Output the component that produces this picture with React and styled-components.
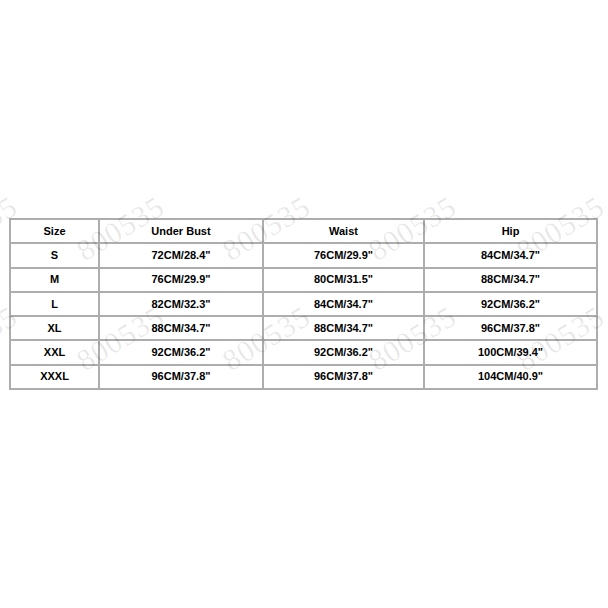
import styled, { createGlobalStyle } from 'styled-components'

const Global = createGlobalStyle`
  html, body {
    margin: 0;
    padding: 0;
    background: #fff;
  }
`

const Page = styled.div`
  position: relative;
  width: 608px;
  height: 608px;
  overflow: hidden;
  box-sizing: border-box;
  padding: 218px 10px 0 9px;
  background: #fff;
`

const SizeTable = styled.table`
  width: 587px;
  table-layout: fixed;
  border-collapse: collapse;
  font-family: "Liberation Sans", Arial, sans-serif;
  font-size: 11px;
  font-weight: bold;
  color: #000;
`

const Col = styled.col`
  width: ${p => p.w}px;
`

const Cell = styled.td`
  height: 22.3px;
  padding: 0;
  border: 2px solid #adadad;
  text-align: center;
  vertical-align: middle;
  line-height: 1;
`

const Marks = styled.div`
  position: absolute;
  inset: 0;
  pointer-events: none;
`

const Mark = styled.span`
  position: absolute;
  left: ${p => p.x}px;
  top: ${p => p.y}px;
  transform: rotate(-31deg);
  transform-origin: left bottom;
  font-family: "Liberation Serif", "Times New Roman", serif;
  font-size: 30px;
  line-height: 30px;
  letter-spacing: 1px;
  color: rgba(0, 0, 0, 0.09);
  white-space: nowrap;
`

const rows = [
  ['Size', 'Under Bust', 'Waist', 'Hip'],
  ['S', '72CM/28.4"', '76CM/29.9"', '84CM/34.7"'],
  ['M', '76CM/29.9"', '80CM/31.5"', '88CM/34.7"'],
  ['L', '82CM/32.3"', '84CM/34.7"', '92CM/36.2"'],
  ['XL', '88CM/34.7"', '88CM/34.7"', '96CM/37.8"'],
  ['XXL', '92CM/36.2"', '92CM/36.2"', '100CM/39.4"'],
  ['XXXL', '96CM/37.8"', '96CM/37.8"', '104CM/40.9"'],
]

const widths = [89, 164, 161, 173]

const marks = []
;[236, 346].forEach(y => {
  ;[-60, 87, 233, 379, 527].forEach(x => marks.push({ x, y }))
})

export default function App() {
  return (
    <>
      <Global />
      <Page>
        <SizeTable>
          <colgroup>
            {widths.map((w, i) => <Col key={i} w={w} />)}
          </colgroup>
          <tbody>
            {rows.map((r, i) => (
              <tr key={i}>
                {r.map((c, j) => <Cell key={j}>{c}</Cell>)}
              </tr>
            ))}
          </tbody>
        </SizeTable>
        <Marks>
          {marks.map((m, i) => (
            <Mark key={i} x={m.x} y={m.y}>800535</Mark>
          ))}
        </Marks>
      </Page>
    </>
  )
}
